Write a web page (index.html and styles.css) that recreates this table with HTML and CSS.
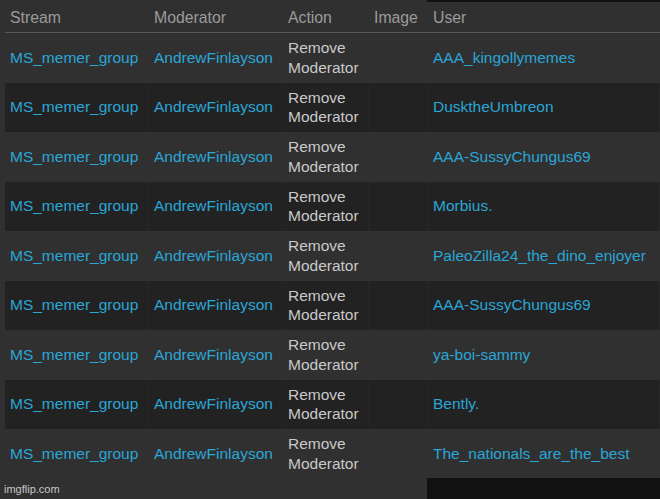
FILE: index.html
```html
<!DOCTYPE html>
<html>
<head>
<meta charset="utf-8">
<link rel="stylesheet" href="styles.css">
</head>
<body>
<div class="table">
  <div class="row head">
    <div class="c c1">Stream</div><div class="c c2">Moderator</div><div class="c c3">Action</div><div class="c c4">Image</div><div class="c c5">User</div>
  </div>
  <div class="row"><div class="c c1 link">MS_memer_group</div><div class="c c2 link">AndrewFinlayson</div><div class="c c3 act">Remove<br>Moderator</div><div class="c c4"></div><div class="c c5 link">AAA_kingollymemes</div></div>
  <div class="row dark"><div class="c c1 link">MS_memer_group</div><div class="c c2 link">AndrewFinlayson</div><div class="c c3 act">Remove<br>Moderator</div><div class="c c4"></div><div class="c c5 link">DusktheUmbreon</div></div>
  <div class="row"><div class="c c1 link">MS_memer_group</div><div class="c c2 link">AndrewFinlayson</div><div class="c c3 act">Remove<br>Moderator</div><div class="c c4"></div><div class="c c5 link">AAA-SussyChungus69</div></div>
  <div class="row dark"><div class="c c1 link">MS_memer_group</div><div class="c c2 link">AndrewFinlayson</div><div class="c c3 act">Remove<br>Moderator</div><div class="c c4"></div><div class="c c5 link">Morbius.</div></div>
  <div class="row"><div class="c c1 link">MS_memer_group</div><div class="c c2 link">AndrewFinlayson</div><div class="c c3 act">Remove<br>Moderator</div><div class="c c4"></div><div class="c c5 link">PaleoZilla24_the_dino_enjoyer</div></div>
  <div class="row dark"><div class="c c1 link">MS_memer_group</div><div class="c c2 link">AndrewFinlayson</div><div class="c c3 act">Remove<br>Moderator</div><div class="c c4"></div><div class="c c5 link">AAA-SussyChungus69</div></div>
  <div class="row"><div class="c c1 link">MS_memer_group</div><div class="c c2 link">AndrewFinlayson</div><div class="c c3 act">Remove<br>Moderator</div><div class="c c4"></div><div class="c c5 link">ya-boi-sammy</div></div>
  <div class="row dark"><div class="c c1 link">MS_memer_group</div><div class="c c2 link">AndrewFinlayson</div><div class="c c3 act">Remove<br>Moderator</div><div class="c c4"></div><div class="c c5 link">Bently.</div></div>
  <div class="row"><div class="c c1 link">MS_memer_group</div><div class="c c2 link">AndrewFinlayson</div><div class="c c3 act">Remove<br>Moderator</div><div class="c c4"></div><div class="c c5 link">The_nationals_are_the_best</div></div>
</div>
<div class="blk-top"></div>
<div class="blk-bottom"></div>
<div class="mark">imgflip.com</div>
</body>
</html>
```
FILE: styles.css
```css
html, body {
  margin: 0;
  padding: 0;
  background: #303030;
  width: 660px;
  height: 499px;
  overflow: hidden;
  font-family: "Liberation Sans", Arial, sans-serif;
}
.table {
  margin-left: 5px;
  width: 655px;
}
.row {
  display: grid;
  grid-template-columns: 144px 134px 86px 59px 1fr;
  height: 49.5px;
  align-items: center;
  font-size: 15.5px;
}
.row.head {
  height: 29px;
  padding-top: 3px;
  border-bottom: 1px solid #575757;
  color: #9b9b9b;
  font-size: 15.8px;
}
.row.dark {
  background: #222222;
}
.row.dark .c {
  height: 100%;
  display: flex;
  align-items: center;
  box-shadow: inset -1px 0 0 #262626;
}
.c {
  padding-left: 5px;
  white-space: nowrap;
  overflow: hidden;
}
.link {
  color: #2aa6d7;
}
.act {
  color: #c9c9c9;
  line-height: 19.5px;
}
.blk-top {
  position: absolute;
  left: 427px;
  top: 0;
  width: 233px;
  height: 2px;
  background: #111;
}
.blk-bottom {
  position: absolute;
  left: 427px;
  top: 478px;
  width: 233px;
  height: 21px;
  background: #111;
}
.mark {
  position: absolute;
  left: 4px;
  top: 483px;
  font-size: 11px;
  color: #c8c8c8;
}
```
